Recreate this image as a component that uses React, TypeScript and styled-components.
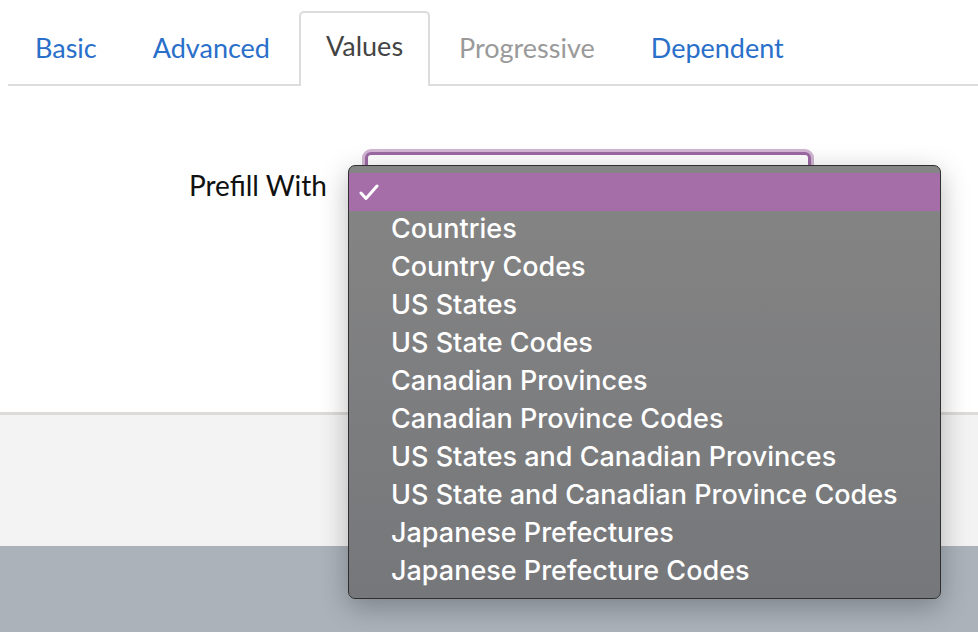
import React from "react";
import styled, { createGlobalStyle } from "styled-components";

const Global = createGlobalStyle`
  html, body { margin: 0; padding: 0; background: #fff; }
  body { font-family: "Lato", "Noto Sans", sans-serif; }
`;

const Page = styled.div`
  position: relative;
  width: 978px;
  height: 632px;
  display: flex;
  flex-direction: column;
  overflow: hidden;
`;

const TabBar = styled.div`
  display: flex;
  align-items: flex-end;
  margin-left: 8px;
  padding-top: 11px;
  border-bottom: 2px solid #dcdcdc;
  height: 73px;
`;

const Tab = styled.div<{ $state: "link" | "active" | "disabled" }>`
  height: 73px;
  box-sizing: border-box;
  display: flex;
  align-items: center;
  padding: 0 25px 6px;
  margin-right: 2px;
  margin-bottom: -2px;
  font-size: 27px;
  border: 2px solid transparent;
  border-bottom: none;
  border-radius: 5px 5px 0 0;
  color: ${(p) =>
    p.$state === "link" ? "#2a6fc9" : p.$state === "active" ? "#444" : "#9a9a9a"};
  ${(p) =>
    p.$state === "active" &&
    `border-color: #dcdcdc; background: #fff; height: 75px; padding-bottom: 8px;`}
`;

const Body = styled.div`
  height: 326px;
  display: flex;
  align-items: flex-start;
  padding-top: 66px;
  box-sizing: border-box;
`;

const Label = styled.div`
  width: 327px;
  text-align: right;
  font-size: 28px;
  color: #111;
  line-height: 40px;
  margin-top: 13px;
`;

const Select = styled.div`
  margin-left: 38px;
  width: 446px;
  height: 40px;
  box-sizing: border-box;
  border-radius: 6px;
  border: 3px solid #9b69a2;
  box-shadow: 0 0 0 3px #d2b6d4;
  background: #fff;
`;

const Footer = styled.div`
  height: 131px;
  background: #f3f3f3;
  border-top: 3px solid #dddbd9;
`;

const Bottom = styled.div`
  flex: 1;
  background: #abb2ba;
`;

const Popup = styled.div`
  position: absolute;
  left: 348px;
  top: 165px;
  width: 593px;
  height: 434px;
  box-sizing: border-box;
  border: 1px solid #2f2f2f;
  border-radius: 7px;
  background: linear-gradient(#858585, #76777a);
  box-shadow: 0 8px 28px rgba(0, 0, 0, 0.28);
  padding: 7px 0;
  font-family: "Inter", "Liberation Sans", sans-serif;
  color: #fff;
`;

const Option = styled.div<{ $selected?: boolean }>`
  height: 38px;
  box-sizing: border-box;
  display: flex;
  align-items: center;
  padding: 0 0 3px 42px;
  position: relative;
  font-size: 27px;
  font-weight: 500;
  background: ${(p) => (p.$selected ? "#a56ea8" : "transparent")};
`;

const Check = styled.svg`
  position: absolute;
  left: 9px;
  top: 11px;
`;

const options = [
  "Countries",
  "Country Codes",
  "US States",
  "US State Codes",
  "Canadian Provinces",
  "Canadian Province Codes",
  "US States and Canadian Provinces",
  "US State and Canadian Province Codes",
  "Japanese Prefectures",
  "Japanese Prefecture Codes",
];

export default function App() {
  return (
    <Page>
      <Global />
      <TabBar>
        <Tab $state="link">Basic</Tab>
        <Tab $state="link">Advanced</Tab>
        <Tab $state="active">Values</Tab>
        <Tab $state="disabled">Progressive</Tab>
        <Tab $state="link">Dependent</Tab>
      </TabBar>
      <Body>
        <Label>Prefill With</Label>
        <Select />
      </Body>
      <Footer />
      <Bottom />
      <Popup>
        <Option $selected>
          <Check width="22" height="17" viewBox="0 0 22 17">
            <path
              d="M3 9 L8 14.5 L19 2"
              fill="none"
              stroke="#fff"
              strokeWidth="3"
              strokeLinecap="round"
              strokeLinejoin="round"
            />
          </Check>
        </Option>
        {options.map((o) => (
          <Option key={o}>{o}</Option>
        ))}
      </Popup>
    </Page>
  );
}
